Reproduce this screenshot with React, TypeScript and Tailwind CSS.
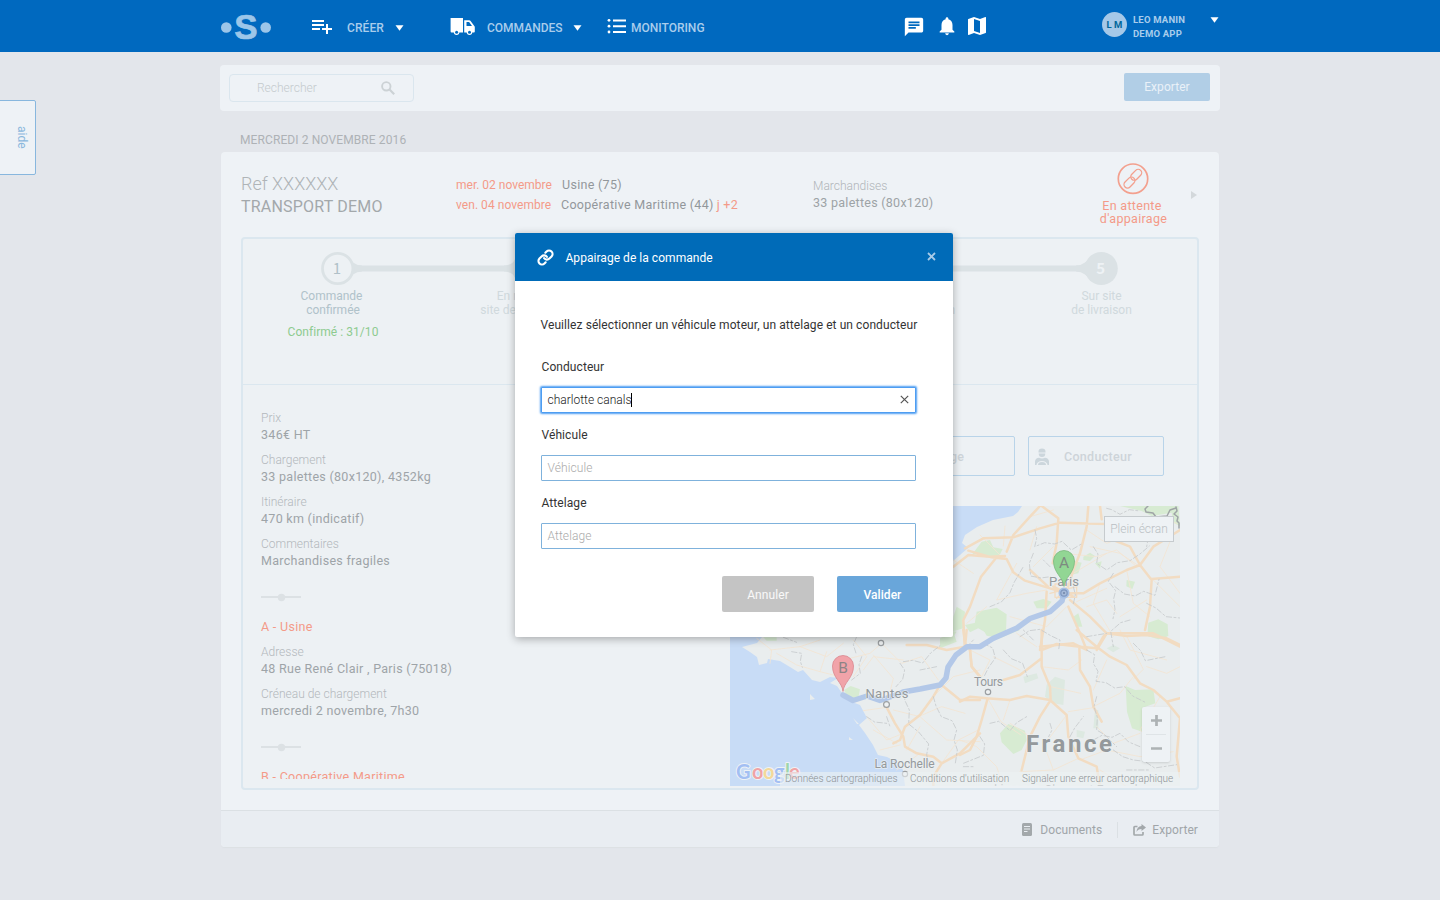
import { ReactNode } from "react";
import { Link } from "lucide-react";
import { MdChat, MdMap, MdNotifications } from "react-icons/md";

function Caret() {
  return (
    <svg className="h-[6px] w-[9px] shrink-0" viewBox="0 0 9 6">
      <path d="M.5 .2h8L4.5 5.800z" fill="#fff" />
    </svg>
  );
}

function TopBar() {
  return (
    <header className="flex h-[52px] items-start bg-[#0069bf] pl-[221px] text-[12px] leading-[16px] font-medium text-[#a9cdec]">
      <svg className="mt-[6px] h-[42px] w-[50px] shrink-0" viewBox="0 -4 50 42">
        <circle cx="5.3" cy="17.5" r="5.3" fill="#9cc6e9" />
        <circle cx="44.7" cy="17.5" r="5.3" fill="#9cc6e9" />
        <text x="25" y="29.2" textAnchor="middle" fontFamily="Liberation Sans, sans-serif" fontSize="35" fontWeight="700" fill="#9cc6e9" stroke="#9cc6e9" strokeWidth="0.7">S</text>
      </svg>

      <svg className="mt-[14px] ml-[39px] size-[24px] shrink-0" viewBox="0 0 24 24">
        <path fill="#fff" d="M14 10H2v2h12v-2zm0-4H2v2h12V6zm4 8v-4h-2v4h-4v2h4v4h2v-4h4v-2h-4zM2 16h8v-2H2v2z" />
      </svg>
      <span className="mt-[20px] ml-[13px] w-[48px] tracking-[0.100px] whitespace-nowrap">CRÉER</span>
      <span className="mt-[25px] flex"><Caret /></span>

      <svg className="mt-[17px] ml-[46px] h-[19px] w-[26px] shrink-0" viewBox="0 0 26 19">
        <path fill="#fff" d="M1 1h12v14.400H1.500c-.6 0-.9-.3-.9-.9V1.400z" />
        <path fill="#fff" fillRule="evenodd" d="M14.200 3.200h5c.5 0 .9.200 1.200.600l3.900 5.200c.3.400.5.800.5 1.300v4.200c0 .6-.3.900-.9.900h-9.700zm2.300 1.900v3.900h5.500l-2.900-3.900z" />
        <circle cx="6.600" cy="15.300" r="2.700" fill="#fff" />
        <circle cx="19.500" cy="15.300" r="2.700" fill="#fff" />
        <circle cx="6.600" cy="15.200" r="1.500" fill="#0069bf" />
        <circle cx="19.500" cy="15.200" r="1.500" fill="#0069bf" />
      </svg>
      <span className="mt-[20px] ml-[11px] w-[86px] whitespace-nowrap">COMMANDES</span>
      <span className="mt-[25px] flex"><Caret /></span>

      <svg className="mt-[18px] ml-[25px] h-[16px] w-[20px] shrink-0" viewBox="0 0 20 16" fill="#fff">
        <path d="M6 1.500h13v2H6zM6 7.200h13v2H6zM6 13h13v2H6z" />
        <circle cx="2" cy="2.300" r="1.400" />
        <circle cx="2" cy="8.200" r="1.400" />
        <circle cx="2" cy="14" r="1.400" />
      </svg>
      <span className="mt-[20px] ml-[4px] w-[272px] whitespace-nowrap">MONITORING</span>

      <MdChat className="mt-[16px] size-[22px] text-white" />
      <MdNotifications className="mt-[15px] ml-[11px] size-[22px] text-white" />
      <MdMap className="mt-[14px] ml-[7px] size-[24px] text-white" />

      <span className="mt-[12px] ml-[113px] flex h-[25px] w-[25px] items-center justify-center rounded-full bg-[#a5c8e8] text-[9.500px] font-bold text-[#00669a]">L M</span>
      <span className="mt-[13px] ml-[6px] w-[77px] text-[9.500px] leading-[14px] font-bold tracking-[0.200px] whitespace-nowrap">
        LEO MANIN
        <br />
        DEMO APP
      </span>
      <span className="mt-[17px] flex"><Caret /></span>
    </header>
  );
}

function SearchBar() {
  return (
    <div className="flex h-[46px] justify-between rounded-[4px] bg-[#eef2f6] px-[9px]">
      <div className="mt-[9px] flex h-[28px] w-[185px] items-center rounded-[4px] border border-[#dae6ee] pl-[27px] text-[12px] font-light text-[#c4cacd]">
        <span className="w-[124px]">Rechercher</span>
        <svg className="size-[14px]" viewBox="0 0 14 14" fill="none" stroke="#ccd2d5" strokeWidth="1.900">
          <circle cx="5.300" cy="5.300" r="4.200" />
          <path d="M8.300 8.300L13.200 13.200" strokeWidth="2.200" />
        </svg>
      </div>
      <button className="mt-[8px] mr-[1px] h-[28px] w-[86px] rounded-[2px] bg-[#b1cee6] text-[12px] tracking-[0.050px] text-[#eaf1f8]">Exporter</button>
    </div>
  );
}

function OrderHeader() {
  return (
    <div className="flex h-[85px] pl-[20px] whitespace-nowrap">
      <div className="w-[215px] pt-[21px] text-[#a3a8ab]">
        <div className="mb-[1px] text-[18px] leading-[22px] font-light text-[#afb4b7]">Ref XXXXXX</div>
        <div className="text-[16px] leading-[22px] tracking-[0.200px]">TRANSPORT DEMO</div>
      </div>
      <div className="w-[357px] pt-[23px] text-[12.500px] leading-[20px] tracking-[0.300px] text-[#92979b]">
        <div className="flex"><span className="w-[106px] text-[12px] tracking-normal text-[#f49a88]">mer. 02 novembre</span>Usine (75)</div>
        <div className="flex">
          <span className="w-[105px] text-[12px] tracking-[0.050px] text-[#f49a88]">ven. 04 novembre</span>Coopérative Maritime (44)
          <span className="ml-[3px] text-[#f49a88]">j +2</span>
        </div>
      </div>
      <div className="w-[286px] pt-[26px]">
        <div className="text-[12px] leading-[16px] font-light text-[#b0b5b9]">Marchandises</div>
        <div className="text-[12.500px] leading-[17px] tracking-[0.270px] text-[#9da3a6]">33 palettes (80x120)</div>
      </div>
      <div className="flex w-[68px] flex-col items-center pt-[11px] text-[12.500px] leading-[13px] tracking-[0.300px] text-[#f49a88]">
        <svg className="mb-[4px] size-[32px]" viewBox="0 0 32 32" fill="none" stroke="#f3a08e" strokeWidth="1.300">
          <circle cx="16" cy="15.700" r="14.700" strokeWidth="1.700" />
          <rect x="13" y="8.300" width="12.500" height="7" rx="3.500" transform="rotate(-45 19.200 11.800)" />
          <rect x="6.200" y="16" width="12.500" height="7" rx="3.500" transform="rotate(-45 12.500 19.500)" />
        </svg>
        <div className="-ml-[2px]">En attente</div>
        <div className="ml-[1px]">d'appairage</div>
      </div>
      <svg className="mt-[39px] ml-[24px] h-[8px] w-[6px]" viewBox="0 0 6 8"><path d="M0 0l6 4-6 4z" fill="#d3d8db" /></svg>
    </div>
  );
}

function StepLabel({ a, b, shifted }: { a: string; b: string; shifted?: boolean }) {
  return (
    <div className={shifted ? "w-[191px] pl-[6px] text-center whitespace-nowrap" : "w-[191px] text-center whitespace-nowrap"}>
      {a}
      <br />
      {b}
    </div>
  );
}

function Stepper() {
  return (
    <div className="h-[146px] overflow-hidden border-b border-[#dbe7ef]">
      <svg className="mt-[12px] h-[36px] w-[954px]" viewBox="0 0 954 36">
        <path d="M94.500 17.500H858" stroke="#dbe2e5" strokeWidth="6" />
        <path d="M103 5L110 11.500Q114 14.500 119 14.500V20.500Q114 20.500 110 23.500L103 30zM277 5L270 11.500Q266 14.500 261 14.500V20.500Q266 20.500 270 23.500L277 30zM849 5L842 11.500Q838 14.500 833 14.500V20.500Q838 20.500 842 23.500L849 30z" fill="#dbe2e5" />
        <circle cx="94.700" cy="17.500" r="15.200" fill="#edf1f4" stroke="#dbe2e5" strokeWidth="2.800" />
        <circle cx="285.500" cy="17.500" r="16.500" fill="#dbe2e5" />
        <circle cx="476.500" cy="17.500" r="16.500" fill="#dbe2e5" />
        <circle cx="667.500" cy="17.500" r="16.500" fill="#dbe2e5" />
        <circle cx="858.300" cy="17.500" r="16.500" fill="#dbe2e5" />
        <g fontFamily="Noto Sans CJK JP, Noto Sans, sans-serif" fontSize="15" textAnchor="middle" fill="#eef2f5">
          <text x="94" y="23" fill="#b0c0c8">1</text>
          <text x="285.500" y="23" fontWeight="700">2</text>
          <text x="476.500" y="23" fontWeight="700">3</text>
          <text x="667.500" y="23" fontWeight="700">4</text>
          <text x="857.800" y="23" fontWeight="700">5</text>
        </g>
      </svg>
      <div className="mt-[2px] flex text-[12px] leading-[14px]">
        <div className="w-[181px]">
          <div className="text-center text-[#b0c2ca]">
            <div className="-ml-[3px]">Commande</div>
            <div>confirmée</div>
            <div className="mt-[8px] tracking-[0.050px] text-[#8dcb90]">Confirmé : 31/10</div>
          </div>
        </div>
        <div className="ml-[10px] flex text-[#d0d9dd]">
          <StepLabel a="En route vers" b="site de chargement" shifted />
          <StepLabel a="Sur site" b="de chargement" />
          <StepLabel a="En route vers" b="site de livraison" shifted />
          <StepLabel a="Sur site" b="de livraison" />
        </div>
      </div>
    </div>
  );
}

function Field({ label, children }: { label: string; children: ReactNode }) {
  return (
    <div className="mb-[9px] whitespace-nowrap">
      <div className="text-[12px] leading-[16px] font-light text-[#b3b8bc]">{label}</div>
      <div className="text-[12.500px] leading-[17px] tracking-[0.290px] text-[#9ea4a8]">{children}</div>
    </div>
  );
}

function Separator() {
  return (
    <svg className="h-[38px] w-[40px]" viewBox="0 0 40 38">
      <path d="M0 19h40" stroke="#dce1e4" strokeWidth="2" />
      <circle cx="20.500" cy="19.500" r="3.700" fill="#dce1e4" />
    </svg>
  );
}

function Details() {
  return (
    <div className="h-[394px] w-[469px] overflow-hidden pt-[25px] pl-[18px]">
      <Field label="Prix">346€ HT</Field>
      <Field label="Chargement">33 palettes (80x120), 4352kg</Field>
      <Field label="Itinéraire">470 km (indicatif)</Field>
      <Field label="Commentaires">Marchandises fragiles</Field>
      <Separator />
      <div className="mb-[6px] text-[12.500px] leading-[22px] tracking-[0.300px] text-[#f49a88]">A - Usine</div>
      <Field label="Adresse">48 Rue René Clair , Paris (75018)</Field>
      <Field label="Créneau de chargement">mercredi 2 novembre, 7h30</Field>
      <Separator />
      <div className="text-[12.500px] leading-[22px] tracking-[0.300px] whitespace-nowrap text-[#f49a88]">B - Coopérative Maritime</div>
    </div>
  );
}

const north = "translate(210 -86) scale(.33333)";
const west = "translate(-10 124) scale(.33333)";
const south = "translate(230 124) scale(.33333)";

function RouteMap() {
  return (
    <div className="relative h-[280px] w-[450px] overflow-hidden bg-[#e9edee]">
      <svg className="size-full" viewBox="0 0 450 280" fill="none" strokeLinejoin="round" strokeLinecap="round">
        <path fill="#c8dcf6" d="M0 0H292L288 6 283 10 263 14 247 21 235 29 232 37 238 42 230 49 223 55 190 60V120L45 125 32 131 27 137 12 141 20 146 27 151 29 159 37 157 38 153 50 155 60 161 68 166 73 164 82 174 90 176 100 171 108 172 100 177 107 180 112 187 122 196 130 199 137 212 129 219 135 227 143 239 148 249 157 251 167 256 173 264 175 280H0z" />
        <path fill="#e9edee" d="M80 188l5 5-5 1zM119 231l4 3-4 0zM123 212l6 6-2 0z" />
        <g fill="#d7ebd2">
          <g transform={north}>
            <path d="M95 405L125 365l25-5 10 22 28 5-10 20-40 5-20-12zM540 258h175l5 60-20-10-5-30-60 10-30-15zM430 410l20-12 15 10-15 15-20-3zM465 430l20-6-5 22zM390 420l35 8-10 32-25 5zM280 545l30-8 25 8-15 20-30 0zM110 575l60-12 30 20-2 50-60 5-35-20zM40 590l10-30 25 15-5 50-35 10zM75 615l45-10 10 12-40 20zM625 608l30-10 28 15 2 35-30 10-33-10zM400 590l15-10 12 40-20 0zM560 480l25 5-8 22-18-8zM0 655l40-20 10 30-50 20z" />
          </g>
          <g transform={west}>
            <path d="M372 180l20-12 28 10-5 25-30 3zM680 0l30 5-20 30h-20zM130 22h40v10h-30z" />
          </g>
          <g transform={south}>
            <path d="M120 310l25-28 50 20 5 28-15 30-25 12-35-35zM497 168l28 12 55-2 6 42-30 10-10 75-30-10-15-50zM70 0h110l-60 25-40-8zM565 0h50l5 20-30 5z" />
            <path fill="#dde9e1" d="M260 165l25-25 30 10-5 75-30-5-25-20zM190 140l40-10 5 15-40 15zM440 55l20-10 20 10-20 12zM405 240l10 0 0 55-15 0zM350 300l25 5-5 20-20-5z" />
          </g>
        </g>

        <g stroke="#f3e5d2" strokeWidth="2.500">
          <g transform={north}>
            <path d="M195 318l-5 60M120 345l70 70M270 290l70-20M290 320l-20 70M370 400l100 10 60-20 60 50M440 330l60 40 80-30M340 380l-60 60M230 430l-60 110 90-20 60-10M400 460l100-60M480 490l-20 60 60 100M560 450l20 100 50 40M380 560l-60 60-110-30M700 340l-40 100 60 80M100 460l-60-40M140 560l-60 50M230 640l60 40M540 590l80-50M440 560l60-20 30 40M600 440l-60-40-90-20M500 290l90 30 60-30 60 20M640 480l80 80M410 545l90-40" />
          </g>
          <g transform={west}>
            <path d="M110 25l45 35-5 40M150 60l90-10 60-20M170 70l60 35 70 20 60 15M240 50l80 30 50-40M300 125l20-60M370 90l80-20 35-30M430 120l30-40 90 10M460 75l60 70-10 40M485 40l60 60 60-20 50 70M500 232l-70 10M520 240l80 20 80 70 100 5M595 260l70-30 70 20M440 260l60 70 50-20M460 300l70 40M480 360l60-15M560 360l40-70M640 200l60-60 80-20M600 370l-70 50M665 400l50-70 60-30M400 140l40-60-40-50" />
          </g>
          <g transform={south}>
            <path d="M325 245l75-12M0 330l50 20 60 60 20 60M180 425l100-5 75-35M360 390l80-30 100 20 100-15M420 420l80 50M245 110l80 10 40-30M272 170l90 20M100 80l80 40M83 205l40 70 60 40M440 90l-40 90M400 230l80-40 40-50M500 18l50 100-30 30M560 110l60 20 40-20M210 320l-60-40M320 255l-60 80M410 290l50 50 80-30M30 60l60 30-30 60M600 200l-60 100 60 60M480 0l30 60 110 30M150 210l-20 60M250 340l30 80" />
          </g>
        </g>

        <g stroke="#f2dcc2" strokeWidth="7.500">
          <g transform={north}>
            <path d="M0 460l40-20 45-35 65 5 45-2M300 258l-30 32-50 55-20 50M75 385l55-30 90-3 80-27 60-17 140 4M85 392l70 20 45 5 20 40 35 25 75 23M305 258l50 37-5 75-12 60M445 258l-5 62-20 80-20 50-15 50M330 505l50 15 50 0 50-30 80-40 40-15 40-55 80-50M600 435l-30-55-50-20M600 435l35 45-5 80-15 70M635 477l85-7M165 418l-42 52-33 90-20 40 5 90M320 515l-5 85-15 90M390 540l60 50 50 50 60 0 80 0 80 40M385 560l35 80 20 50M500 640l-30 50M300 680l100-10 40 20M480 258l5 40M340 500l60 30M270 450l60 55" />
            <path strokeWidth="4" d="M345 492h65v40h-65zM330 520l80-20M350 535l40-45" />
          </g>
          <g transform={west}>
            <path d="M560 45h60l60 15 55-10 5-50M660 165l-20 35-40 55-45 35-15 40-20 10M500 232l25 48 25 40 5 30 35 20 50 10 25 20 55-30 60-60M665 165l55 45 60 0M750 60l5 50 25 30M665 400l-25 40v40" />
          </g>
          <g transform={south}>
            <path d="M10 0l5 40 15 20 5 50 25 30M0 215l30-15 50 5 70 5 50-12 70 12 50 45 5 65 30 65 55 25 10 60M83 205l-18 65-15 50-20 40-30 15M245 0v110l25 60 2 40-32 50-30 60-25 100M130 150l50-15 65-50M245 60l45-18 70 8 50 5 20-35 10-10 60 8 60-3 60 10 40 20M350 0l60 50 40 30 50 25 40 55 40 20 40 35 40 50-10 115 10 60M358 50l2 70 30 50 10 60 25 45M620 215l40-10" />
          </g>
        </g>

        <g stroke="#c6cacc" strokeWidth="2.500" strokeDasharray="16 7 6 7">
          <g transform={north}>
            <path d="M285 330l5 25-6 25 30-12 30 4 22-8 28 26 30-18M500 265l15 4 25 14 28-14 32 4M280 400l-12 30 4 38 30 6 30-4M460 380l14 22-4 28 30 20 32-22 38-6 30-20 28-24M520 460l-15 24 22 28-6 24 4 32-6 28M525 500l28 22 32 6 26-14 34 12 12-48M330 440l-20-20M150 560l34-14 26-28 12-30 28-48M240 650l28-18 32-4 34 20 26 12-4 30M400 500l6 24-6 28M570 600l-28 8-30 26 8 46M620 550l28 14 30 26 42 4M640 320l-14 26-6 34" />
          </g>
          <g transform={west}>
            <path d="M190 22l40 15M215 65l30 5-4 24 6 18M410 20l-10 24 8 26M425 80l-8 24 4 26-26 20M540 100l14 20-6 28-20 22M550 95l28-4 30 8 24-30 28-22M560 180l-6 30 14 30-2 42 30 24 30 36-6 32 8 38M700 80l24-12 36-38M640 200l8 28 16 32 32 12 14 28-8 30 10 30-6 40M440 260l24 16 36 4M730 410l30 0M500 260l10 30M600 120l50-10" />
          </g>
          <g transform={south}>
            <path d="M70 40l28 14 8 30-20 28-14 28M130 60l24 26 34 14 14 40M220 30l-30-30M270 280l6 20-10 20M90 280l26-6 34 28 20-24 30-18M380 60l24 14-4 26 14 24-6 30 30 4 26 16 30-4 24 28 36 18M410 200l-8 30 10 32-2 38 24 14 36 36M400 330l26-14 30 6 24-12 26 26 34 14M460 360l28 20 32 10 34 4 30 20 66-10M380 20l60-10M520 40l22 22 14 30 60-12M60 320l14 22-4 34-60 24M330 320l14-26 26-34M500 420l70 0" />
          </g>
        </g>
        <path stroke="#9fa4a6" strokeWidth="1.500" d="M418 0l-3 3 1 3 7 1 3 4 11-1 3-6 6-2M446 1l1 4-3 3 4 3-1 4 2 2v5" />

        <path stroke="#b3c8e8" strokeWidth="5.500" d="M113 189L123 194.500 137 190 150 194.500 160 191 173 186 190 183 210 179 216 172 218 161 226 149 237 140.700 250 140.700 263 132.500 287 122 300 112.500 320 105.700 332 95 334 87" />
        <g stroke="#9b9fa2" strokeWidth="1.200" fill="#eef1f2">
          <circle cx="151" cy="137" r="2.700" />
          <circle cx="156.500" cy="198.500" r="2.900" />
          <circle cx="258" cy="186" r="2.700" />
          <circle cx="175" cy="268" r="2.600" />
        </g>
        <circle cx="334" cy="87" r="5.500" fill="#a6bfe4" />
        <circle cx="334" cy="87" r="3.200" fill="#a5b9d8" stroke="#7e97bf" strokeWidth="1.200" />
        <circle cx="334" cy="87" r="1" fill="#7186a8" />

        <g fontFamily="Roboto, sans-serif" fill="#94999c" stroke="#edf1f2" strokeOpacity=".8" strokeWidth="1.500" paintOrder="stroke" textAnchor="middle">
          <text x="334" y="79.500" fontSize="13" textLength="30">Paris</text>
          <text x="157" y="191.500" fontSize="13" textLength="43">Nantes</text>
          <text x="258.500" y="180" fontSize="12" textLength="29">Tours</text>
          <text x="174.500" y="262" fontSize="12" textLength="60">La Rochelle</text>
          <text x="287" y="287" fontSize="12">Limoges</text>
          <text x="361" y="288" fontSize="12">Clermont-Ferrand</text>
          <text x="339" y="245.500" fontSize="24" fontWeight="700" textLength="86">France</text>
        </g>

        <path d="M334 80c-1-9-10.500-13-10.500-25a10.500 10.500 0 0 1 21 0c0 12-9.500 16-10.500 25z" fill="#92d694" stroke="#7ab77c" strokeWidth=".8" />
        <path d="M113 185c-1-9-10.500-13-10.500-25a10.500 10.500 0 0 1 21 0c0 12-9.500 16-10.500 25z" fill="#f1a3a9" stroke="#d9868e" strokeWidth=".8" />
        <g fontFamily="Roboto, sans-serif" fontSize="15.500" fill="#7d8a81" textAnchor="middle">
          <text x="334" y="61.500">A</text>
          <text x="113" y="166.500" fill="#8d8385">B</text>
        </g>
        <g fontFamily="Lato, sans-serif" fontSize="20" stroke="#eef2f6" strokeWidth="2" paintOrder="stroke" fontWeight="700">
          <text x="6" y="273" fill="#a3bff3">G</text>
          <text x="22" y="273" fill="#f0a3a5">o</text>
          <text x="33" y="273" fill="#f3d99a">o</text>
          <text x="44" y="273" fill="#a3bff3">g</text>
          <text x="55" y="273" fill="#9fd6ab">l</text>
          <text x="59" y="273" fill="#f0a3a5">e</text>
        </g>
      </svg>
      <div className="absolute right-0 bottom-0 flex h-[14px] w-[400px] bg-[#edf1f3]/60 pl-[5px] text-[10px] leading-[14px] font-light whitespace-nowrap text-[#8d9295]">
        <span className="w-[125px]">Données cartographiques</span>
        <span className="w-[112px]">Conditions d'utilisation</span>
        <span>Signaler une erreur cartographique</span>
      </div>
      <div className="absolute top-[10px] right-[6px] h-[26px] w-[70px] border border-[#c6cbce] bg-[#eef2f5] text-center text-[12px] leading-[24px] font-light text-[#babfc3]">Plein écran</div>
      <div className="absolute right-[10px] bottom-[24px] flex h-[55px] w-[28px] flex-col items-center rounded-[2px] bg-[#eef2f5] shadow-sm">
        <svg className="h-[55px] w-[28px]" viewBox="0 0 28 55" fill="none" stroke="#adb2b4">
          <path d="M9 13.500h11M14.500 8v11M9 41.500h11" strokeWidth="2.700" />
          <path d="M4 27.500h20" stroke="#dfe4e7" />
        </svg>
      </div>
    </div>
  );
}

function ResourceButton({ label }: { label: string }) {
  return (
    <div className="flex h-[40px] w-[136px] items-center rounded-[2px] border border-[#b9d4e9] pl-[6px] text-[12.500px] font-medium tracking-[0.300px] text-[#cdd4d9]">
      <svg className="mt-[1px] mr-[15px] h-[18px] w-[14px]" viewBox="0 0 14 18" fill="#ccd6dc">
        <path d="M3.500 3.500a3.500 3 0 0 1 7 0v1h-7zM3.700 5.500h6.600a3.300 3.600 0 0 1-6.600 0z" />
        <path d="M0 17v-3.500C0 11 2 10 4 9.700c2 1 4 1 6 0 2 .3 4 1.300 4 3.800V17h-1.500a5.500 4 0 0 0-11 0z" />
        <path d="M3 17a4 3 0 0 1 8 0z" />
      </svg>
      <span className="mt-[2px]">{label}</span>
    </div>
  );
}

function OrderCard() {
  return (
    <section className="mx-[1px] h-[695px] overflow-hidden rounded-[4px] bg-[#eef2f6] shadow-[0_1px_1px_#dce0e4]">
      <OrderHeader />
      <div className="mx-[20px] h-[553px] rounded-[4px] border-2 border-[#dbe7ef] bg-[#edf1f4]">
        <Stepper />
        <div className="flex">
          <Details />
          <div className="pt-[51px] pl-[18px]">
            <div className="mb-[30px] flex gap-[13px]">
              <ResourceButton label="Véhicule" />
              <ResourceButton label="Attelage" />
              <ResourceButton label="Conducteur" />
            </div>
            <RouteMap />
          </div>
        </div>
      </div>
      <footer className="mt-[20px] flex h-[38px] items-center justify-end border-t border-[#dbe0e4] bg-[#e9edf2] pr-[21px] text-[12px] tracking-[0.080px] text-[#a0a5a9]">
        <svg className="mr-[8px] h-[13px] w-[10px]" viewBox="0 0 10 13">
          <rect width="10" height="13" rx="1.500" fill="#a3a8ab" />
          <path d="M2 3.500h6M2 6h6M2 8.500h3.500" stroke="#e9edf2" strokeWidth="1.200" />
        </svg>
        <span>Documents</span>
        <span className="mr-[15px] ml-[15px] h-[16px] w-px bg-[#dbe0e4]" />
        <svg className="mr-[6px] h-[12px] w-[13px]" viewBox="0 0 13 12" fill="none">
          <path d="M4.500 2.500H1.800Q1 2.500 1 3.300V10.200Q1 11 1.800 11H9.200Q10 11 10 10.200V8" stroke="#a3a8ab" strokeWidth="1.700" />
          <path d="M8.500 0L13 3.600 8.500 7V5C6 5 4.500 6 3.500 8c0-3.500 2-5.700 5-6z" fill="#a3a8ab" />
        </svg>
        <span>Exporter</span>
      </footer>
    </section>
  );
}

function PairingDialog() {
  return (
    <div role="dialog" className="absolute top-[233px] left-[515px] h-[404px] w-[438px] overflow-hidden rounded-[2px] bg-white text-[12px] whitespace-nowrap text-[#333] shadow-[0_2px_8px_rgba(0,0,0,0.3)]">
      <div className="flex h-[48px] items-center bg-[#006bb8] pl-[22px] text-white">
        <Link className="mr-[11.500px] size-[17px]" strokeWidth={3} />
        <span className="mt-[2px] w-[361.500px] tracking-[0.040px]">Appairage de la commande</span>
        <svg className="-mt-[2px] size-[9px]" viewBox="0 0 9 9"><path d="M1 1l7 7M8 1L1 8" stroke="#a8cbe8" strokeWidth="1.800" /></svg>
      </div>
      <div className="pt-[35px] pl-[26px] leading-[18px] tracking-[0.080px]">
        <div className="-ml-[0.500px] mb-[24px]">Veuillez sélectionner un véhicule moteur, un attelage et un conducteur</div>
        <div className="mb-[11px] pl-[0.500px]">Conducteur</div>
        <div className="mb-[13px] flex h-[26px] w-[375px] items-center rounded-[1px] border border-[#4d9df2] bg-white pl-[5.500px] font-light tracking-normal text-[#222] shadow-[0_0_2px_1px_#4d9df2]">
          <span>charlotte canals</span>
          <span className="-ml-[0.500px] h-[14px] w-px bg-black" />
          <svg className="-mt-px mr-[6px] ml-auto size-[9px]" viewBox="0 0 9 9"><path d="M.8.8l7.400 7.400M8.200.8L.8 8.200" stroke="#555" strokeWidth="1.200" /></svg>
        </div>
        <div className="mb-[11px] pl-[0.500px]">Véhicule</div>
        <div className="mb-[13px] flex h-[26px] w-[375px] items-center rounded-[1px] border border-[#7fb2dc] pl-[5.500px] font-light text-[#aaa]">Véhicule</div>
        <div className="mb-[11px] pl-[0.500px]">Attelage</div>
        <div className="flex h-[26px] w-[375px] items-center rounded-[1px] border border-[#7fb2dc] pl-[5.500px] font-light text-[#aaa]">Attelage</div>
      </div>
      <div className="mt-[27px] flex justify-end gap-[23px] pr-[25px]">
        <button className="h-[36px] w-[92px] rounded-[2px] bg-[#c4c4c4] pt-[2px] tracking-[0.100px] text-white/90">Annuler</button>
        <button className="h-[36px] w-[91px] rounded-[2px] bg-[#69a6da] pt-[2px] font-medium tracking-[0.050px] text-white">Valider</button>
      </div>
    </div>
  );
}

export default function App() {
  return (
    <div className="relative h-[900px] w-[1440px] overflow-hidden bg-[#e3e6eb] font-['Roboto',sans-serif]">
      <TopBar />
      <main className="mx-auto w-[1000px] pt-[13px]">
        <SearchBar />
        <h2 className="mt-[21px] mb-[4px] pl-[20px] text-[12px] leading-[16px] tracking-[0.100px] text-[#aeb2b6]">MERCREDI 2 NOVEMBRE 2016</h2>
        <div className="-mt-px pt-px">
          <OrderCard />
        </div>
      </main>
      <aside className="absolute top-[100px] -left-px flex h-[75px] w-[37px] items-center justify-center rounded-r-[2px] border border-[#88b7de] bg-[#eef2f6] pl-[8px] text-[12px] text-[#8bb8dd]">
        <span className="[writing-mode:vertical-rl]">aide</span>
      </aside>
      <PairingDialog />
    </div>
  );
}
